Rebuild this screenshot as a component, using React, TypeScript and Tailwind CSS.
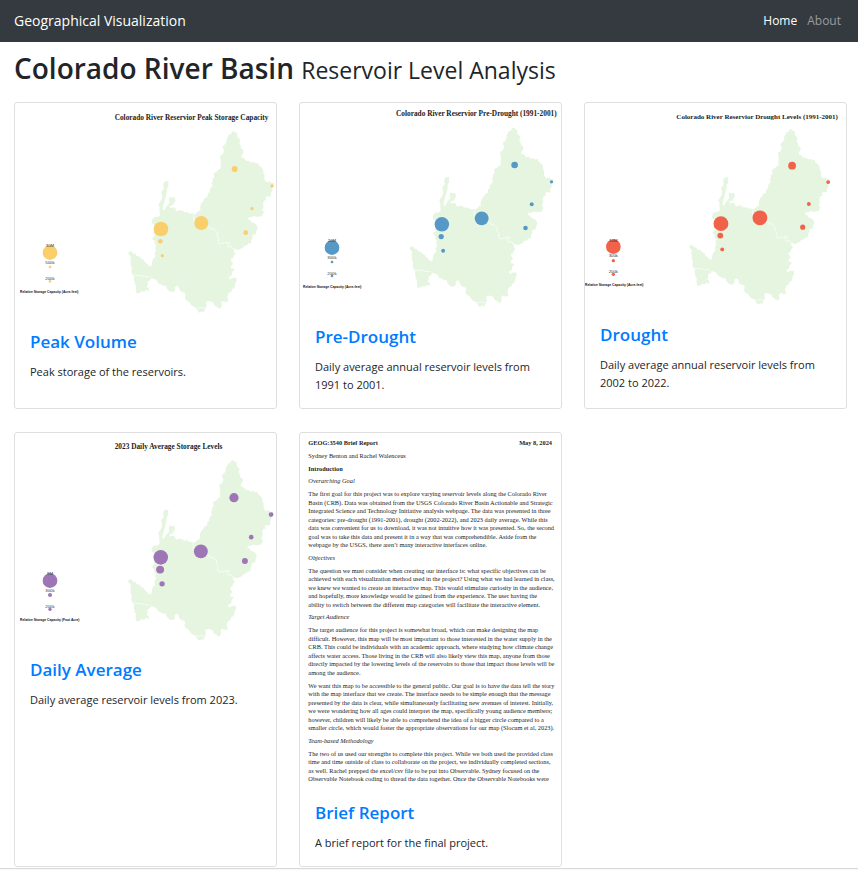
import React from "react";

type Legend = {
  x: number;
  circleY: number;
  dots: { y: number; r: number }[];
  labels: { text: string; y: number }[];
  caption: string;
  captionX: number;
  captionY: number;
};

type MapProps = {
  height: number;
  color: string;
  title: string;
  titleX: number;
  titleY: number;
  titleSize: number;
  transform: string;
  radii: number[];
  legend: Legend;
};

const BASIN =
  "M343 34L336 35L333 42L326 44L324 50L320 56L319 66L316 72L309 78L308 84L312 90L311 97L307 103L300 108L301 117L303 125L301 136L303 146L297 148L292 154L281 160L283 172L277 178L279 184L274 190L278 196L273 204L268 210L270 216L264 220L262 232L255 234L250 243L244 250L240 262L242 270L236 272L230 278L222 283L218 280L210 281L200 275L195 278L190 274L180 270L174 273L168 272L166 265L160 262L150 264L150 257L158 256L163 248L167 240L162 231L155 233L148 230L147 240L149 248L140 258L132 272L128 268L129 258L132 250L136 235L138 226L141 215L140 208L146 198L144 192L147 184L138 183L131 188L130 196L132 205L124 216L127 226L126 237L120 246L115 255L119 262L118 270L120 285L113 292L105 290L97 298L95 308L104 316L104 325L101 340L105 346L99 352L96 357L104 362L103 370L108 376L106 385L108 392L104 400L106 412L100 415L97 423L95 436L90 440L85 436L80 430L76 428L72 420L64 416L60 410L50 408L46 400L40 402L36 394L26 395L25 402L33 410L31 418L33 425L32 434L36 445L34 454L36 462L43 472L41 478L44 485L43 492L48 495L47 508L50 521L55 518L60 519L64 514L72 515L80 510L88 514L86 504L80 501L84 492L82 486L92 480L92 474L100 476L106 478L112 484L114 490L120 491L130 497L138 497L140 505L147 513L152 516L160 516L166 510L164 503L170 497L176 500L180 512L188 517L195 518L197 528L194 532L198 540L208 546L214 556L224 562L230 568L237 578L247 574L252 578L253 570L257 568L259 556L258 545L270 543L280 548L283 556L290 560L297 565L303 564L305 554L303 548L310 542L318 547L325 544L322 530L327 518L335 515L335 508L342 505L346 495L346 488L350 484L349 473L340 473L328 478L327 471L336 465L337 456L344 447L332 445L334 437L340 432L335 426L332 418L340 414L341 406L347 402L340 392L344 388L355 390L362 386L368 384L372 378L380 376L386 370L393 370L394 360L398 352L397 345L408 342L409 334L413 325L410 316L404 310L396 308L390 300L384 298L386 292L394 292L402 288L412 291L420 288L425 290L432 276L426 270L431 260L429 250L432 242L440 240L436 233L442 229L452 230L453 218L458 210L455 204L460 200L462 188L455 190L449 184L440 187L434 180L433 170L434 164L430 160L430 150L424 142L416 136L414 128L408 131L402 126L395 128L385 122L380 124L374 116L364 112L366 104L371 97L369 88L363 86L362 78L358 70L361 60L352 50L352 38L347 40Z";

const STATE_LINES =
  "M240 262L236 272L222 283L221 300L232 310L256 318L270 322L275 330L279 325L286 332L293 338L290 346L297 355L294 367L302 373L306 368L312 371L318 366L329 370L329 364M320 368L326 382L334 378L338 386L347 387M36 465L50 467L60 466L72 470L88 470M100 478L110 484M218 562L232 565L244 563L258 566";

const RESERVOIRS = [
  [123, 327],
  [244, 309],
  [344, 147],
  [456, 198],
  [396, 266],
  [377, 338],
  [121, 364],
  [127, 407],
];

function BasinMap({ height, color, title, titleX, titleY, titleSize, transform, radii, legend }: MapProps) {
  return (
    <svg viewBox={`0 0 783 ${height}`} className="block h-auto w-full" role="img" aria-label={title}>
      <text
        x={titleX}
        y={titleY}
        fontSize={titleSize}
        fill="#222"
        className="font-['Liberation_Serif',serif] font-bold"
      >
        {title}
      </text>
      <g transform={transform}>
        <path d={BASIN} fill="#e5f5e0" />
        <path d={STATE_LINES} fill="none" stroke="#ffffff" strokeWidth="2" />
        {RESERVOIRS.map(([x, y], i) => (
          <circle key={i} cx={x} cy={y} r={radii[i]} fill={color} />
        ))}
      </g>
      <circle cx={legend.x} cy={legend.circleY} r="22" fill={color} />
      {legend.dots.map((d) => (
        <circle key={d.y} cx={legend.x} cy={d.y} r={d.r} fill={color} />
      ))}
      <g fill="#333" fontSize="13" textAnchor="middle" className="font-['Liberation_Sans',sans-serif]">
        {legend.labels.map((l) => (
          <text key={l.y} x={legend.x} y={l.y}>
            {l.text}
          </text>
        ))}
      </g>
      <text
        x={legend.captionX}
        y={legend.captionY}
        fontSize="10"
        fill="#111"
        className="font-['Liberation_Sans',sans-serif] font-bold"
      >
        {legend.caption}
      </text>
    </svg>
  );
}

type Line = [number, string, string?];

const REPORT: Line[] = [
  [74, "Sydney Benton and Rachel Walenceus"],
  [113, "Introduction", "font-bold"],
  [151, "Overarching Goal", "italic"],
  [189, "The first goal for this project was to explore varying reservoir levels along the Colorado River"],
  [215, "Basin (CRB). Data was obtained from the USGS Colorado River Basin Actionable and Strategic"],
  [241, "Integrated Science and Technology Initiative analysis webpage. The data was presented in three"],
  [266, "categories: pre-drought (1991-2001), drought (2002-2022), and 2023 daily average. While this"],
  [292, "data was convenient for us to download, it was not intuitive how it was presented. So, the second"],
  [317, "goal was to take this data and present it in a way that was comprehendible. Aside from the"],
  [343, "webpage by the USGS, there aren’t many interactive interfaces online."],
  [381, "Objectives", "italic"],
  [419, "The question we must consider when creating our interface is: what specific objectives can be"],
  [445, "achieved with each visualization method used in the project? Using what we had learned in class,"],
  [470, "we knew we wanted to create an interactive map. This would stimulate curiosity in the audience,"],
  [496, "and hopefully, more knowledge would be gained from the experience. The user having the"],
  [522, "ability to switch between the different map categories will facilitate the interactive element."],
  [558, "Target Audience", "italic"],
  [597, "The target audience for this project is somewhat broad, which can make designing the map"],
  [623, "difficult. However, this map will be most important to those interested in the water supply in the"],
  [649, "CRB. This could be individuals with an academic approach, where studying how climate change"],
  [675, "affects water access. Those living in the CRB will also likely view this map, anyone from those"],
  [700, "directly impacted by the lowering levels of the reservoirs to those that impact those levels will be"],
  [726, "among the audience."],
  [764, "We want this map to be accessible to the general public. Our goal is to have the data tell the story"],
  [789, "with the map interface that we create. The interface needs to be simple enough that the message"],
  [815, "presented by the data is clear, while simultaneously facilitating new avenues of interest. Initially,"],
  [841, "we were wondering how all ages could interpret the map, specifically young audience members;"],
  [866, "however, children will likely be able to comprehend the idea of a bigger circle compared to a"],
  [892, "smaller circle, which would foster the appropriate observations for our map (Slocum et al, 2023)."],
  [930, "Team-based Methodology", "italic"],
  [968, "The two of us used our strengths to complete this project. While we both used the provided class"],
  [994, "time and time outside of class to collaborate on the project, we individually completed sections,"],
  [1019, "as well. Rachel prepped the excel/csv file to be put into Observable. Sydney focused on the"],
  [1045, "Observable Notebook coding to thread the data together. Once the Observable Notebooks were"],
];

function ReportPage() {
  return (
    <svg viewBox="0 0 783 1062" className="block h-auto w-full" role="img" aria-label="Brief report, first page">
      <g fontSize="19" fill="#222" className="font-['Liberation_Serif',serif]">
        <text x="25" y="36" className="font-bold">
          GEOG:3540 Brief Report
        </text>
        <text x="756" y="36" textAnchor="end" className="font-bold">
          May 8, 2024
        </text>
        {REPORT.map(([y, text, style]) => (
          <text key={y} x="25" y={y} className={style}>
            {text}
          </text>
        ))}
      </g>
    </svg>
  );
}

function Card({ title, text, children }: { title: string; text: string; children: React.ReactNode }) {
  return (
    <article className="rounded-[3px] border border-[#dfdfdf] bg-white">
      <a href="#" tabIndex={-1} aria-hidden="true">
        {children}
      </a>
      <div className="px-[15px] pt-[15px] pb-[14px]">
        <h2 className="mb-[10px] text-[17px] leading-[22px] font-semibold text-[#007bff]">
          <a href="#">{title}</a>
        </h2>
        <p className="text-[11px] leading-[18px]">{text}</p>
      </div>
    </article>
  );
}

export default function App() {
  return (
    <div className="bg-white font-['Open_Sans','Noto_Sans',sans-serif] text-[#212529]">
      <nav className="flex h-[42px] items-center justify-between bg-[#343a40] pr-[17px] pl-[14px]">
        <a href="#" className="text-sm text-white">
          Geographical Visualization
        </a>
        <ul className="flex gap-[10px] text-xs">
          <li>
            <a href="#" className="text-white">
              Home
            </a>
          </li>
          <li>
            <a href="#" className="text-[#999c9f]">
              About
            </a>
          </li>
        </ul>
      </nav>
      <main className="pt-2 pr-[11px] pl-[14px]">
        <h1 className="mb-4 text-[28px] leading-9 font-semibold">
          Colorado River Basin{" "}
          <small className="text-[23px] leading-none font-normal">Reservoir Level Analysis</small>
        </h1>
        <div className="grid grid-cols-1 gap-x-[22px] gap-y-[23px] sm:grid-cols-3">
          <Card title="Peak Volume" text="Peak storage of the reservoirs.">
            <BasinMap
              height={639}
              color="#fbce6c"
              title="Colorado River Reservior Peak Storage Capacity"
              titleX={299}
              titleY={50}
              titleSize={22}
              transform="translate(315 51)"
              radii={[22, 21, 9, 5, 5, 7, 7, 5]}
              legend={{
                x: 105,
                circleY: 449,
                dots: [{ y: 492, r: 4 }, { y: 535, r: 4 }],
                labels: [{ text: "30M", y: 432 }, { text: "500k", y: 482 }, { text: "200k", y: 530 }],
                caption: "Relative Storage Capacity (Acre-feet)",
                captionX: 15,
                captionY: 570,
              }}
            />
          </Card>
          <Card title="Pre-Drought" text="Daily average annual reservoir levels from 1991 to 2001.">
            <BasinMap
              height={624}
              color="#5699c6"
              title="Colorado River Reservior Pre-Drought (1991-2001)"
              titleX={288}
              titleY={39}
              titleSize={22}
              transform="translate(304 41) scale(.988)"
              radii={[22, 21, 10, 5, 6, 7, 8, 6]}
              legend={{
                x: 96,
                circleY: 434,
                dots: [{ y: 477, r: 4 }, { y: 519, r: 4 }],
                labels: [{ text: "20M", y: 418 }, { text: "300k", y: 467 }, { text: "200k", y: 515 }],
                caption: "Relative Storage Capacity (Acre-feet)",
                captionX: 9,
                captionY: 554,
              }}
            />
          </Card>
          <Card title="Drought" text="Daily average annual reservoir levels from 2002 to 2022.">
            <BasinMap
              height={618}
              color="#f1624a"
              title="Colorado River Reservior Drought Levels (1991-2001)"
              titleX={274}
              titleY={47}
              titleSize={21}
              transform="translate(289 46) scale(.966)"
              radii={[23, 23, 12, 6, 6, 8, 9, 6]}
              legend={{
                x: 85,
                circleY: 431,
                dots: [{ y: 473, r: 5 }, { y: 514, r: 5 }],
                labels: [{ text: "10M", y: 416 }, { text: "300k", y: 462 }, { text: "200k", y: 509 }],
                caption: "Relative Storage Capacity (Acre-feet)",
                captionX: 0,
                captionY: 548,
              }}
            />
          </Card>
          <Card title="Daily Average" text="Daily average reservoir levels from 2023.">
            <BasinMap
              height={633}
              color="#9e76b6"
              title="2023 Daily Average Storage Levels"
              titleX={299}
              titleY={49}
              titleSize={22}
              transform="translate(315 48) scale(.994)"
              radii={[22, 21, 14, 7, 7, 9, 12, 8]}
              legend={{
                x: 105,
                circleY: 443,
                dots: [{ y: 486, r: 6 }, { y: 529, r: 5 }],
                labels: [{ text: "9M", y: 427 }, { text: "300k", y: 476 }, { text: "200k", y: 524 }],
                caption: "Relative Storage Capacity (Foot Acre)",
                captionX: 15,
                captionY: 563,
              }}
            />
          </Card>
          <Card title="Brief Report" text="A brief report for the final project.">
            <ReportPage />
          </Card>
        </div>
      </main>
      <footer className="mt-px h-[2px] border-t border-[#d9d9d9] bg-[#f7f7f7]" />
    </div>
  );
}
